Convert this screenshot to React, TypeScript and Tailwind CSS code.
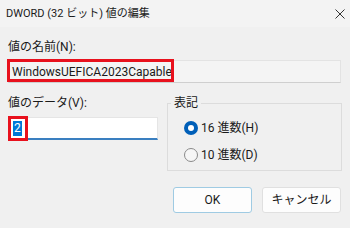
import React from "react";

const font = { fontFamily: 'Roboto, "Noto Sans CJK JP", sans-serif' };

export default function App() {
  return (
    <div
      className="w-[350px] h-[228px] bg-[#f0f0f0] text-[12px] text-[#1a1a1a] flex flex-col overflow-hidden"
      style={font}
    >
      <div className="h-[27px] flex items-center justify-between pl-[6px] pr-[5px] bg-[#f3f3f3]">
        <span className="leading-[16px] mt-[1px] text-[11px]">DWORD (32 ビット) 値の編集</span>
        <svg width="10" height="10" viewBox="0 0 10 10">
          <path d="M0.5 0.5 L9.5 9.5 M9.5 0.5 L0.5 9.5" stroke="#333" strokeWidth="1" />
        </svg>
      </div>
      <div className="flex flex-col px-[8px]">
        <div className="mt-[12px] leading-[16px]">値の名前(N):</div>
        <div className="relative mt-[5px] h-[23px] w-[333px] bg-[#f4f4f4] border border-[#e3e3e3] border-b-[#cfcfcf] flex items-center pl-[3px]">
          <span className="leading-[16px]">WindowsUEFICA2023Capable</span>
          <div className="absolute left-[-2px] top-[-2px] w-[167px] h-[23px] border-[3px] border-[#e8111d]" />
        </div>
        <div className="flex mt-[12px]">
          <div className="flex flex-col w-[159px]">
            <div className="leading-[16px]">値のデータ(V):</div>
            <div className="relative mt-[6px] h-[23px] w-[150px] bg-white border border-[#e5e5e5] border-b-2 border-b-[#3a7fc0] flex items-center pl-[4px]">
              <span className="bg-[#0078d7] text-white leading-[15px] px-[1px]">2</span>
              <div className="absolute left-[-1px] top-[-2px] w-[20px] h-[25px] border-[3px] border-[#e8111d]" />
            </div>
          </div>
          <div className="relative w-[175px] h-[68px] mt-[8px] border border-[#dcdcdc]">
            <div className="absolute left-[3px] top-[-9px] px-[3px] bg-[#f0f0f0] leading-[16px]">表記</div>
            <div className="flex flex-col pl-[16px] pt-[16px] gap-[11px]">
              <div className="flex items-center gap-[3px]">
                <span className="w-[14px] h-[14px] rounded-full bg-[#005fb8] flex items-center justify-center">
                  <span className="w-[6px] h-[6px] rounded-full bg-white" />
                </span>
                <span className="leading-[16px]">16 進数(H)</span>
              </div>
              <div className="flex items-center gap-[3px]">
                <span className="w-[14px] h-[14px] rounded-full border border-[#8a8a8a] bg-[#f6f6f6]" />
                <span className="leading-[16px]">10 進数(D)</span>
              </div>
            </div>
          </div>
        </div>
        <div className="flex justify-end gap-[10px] mt-[16px] pr-[1px]">
          <div className="w-[79px] h-[26px] bg-[#fdfdfd] border border-[#9fcbe3] rounded-[3px] flex items-center justify-center">
            OK
          </div>
          <div className="w-[79px] h-[26px] bg-[#fdfdfd] border border-[#e0e0e0] rounded-[3px] flex items-center justify-center">
            キャンセル
          </div>
        </div>
      </div>
    </div>
  );
}
